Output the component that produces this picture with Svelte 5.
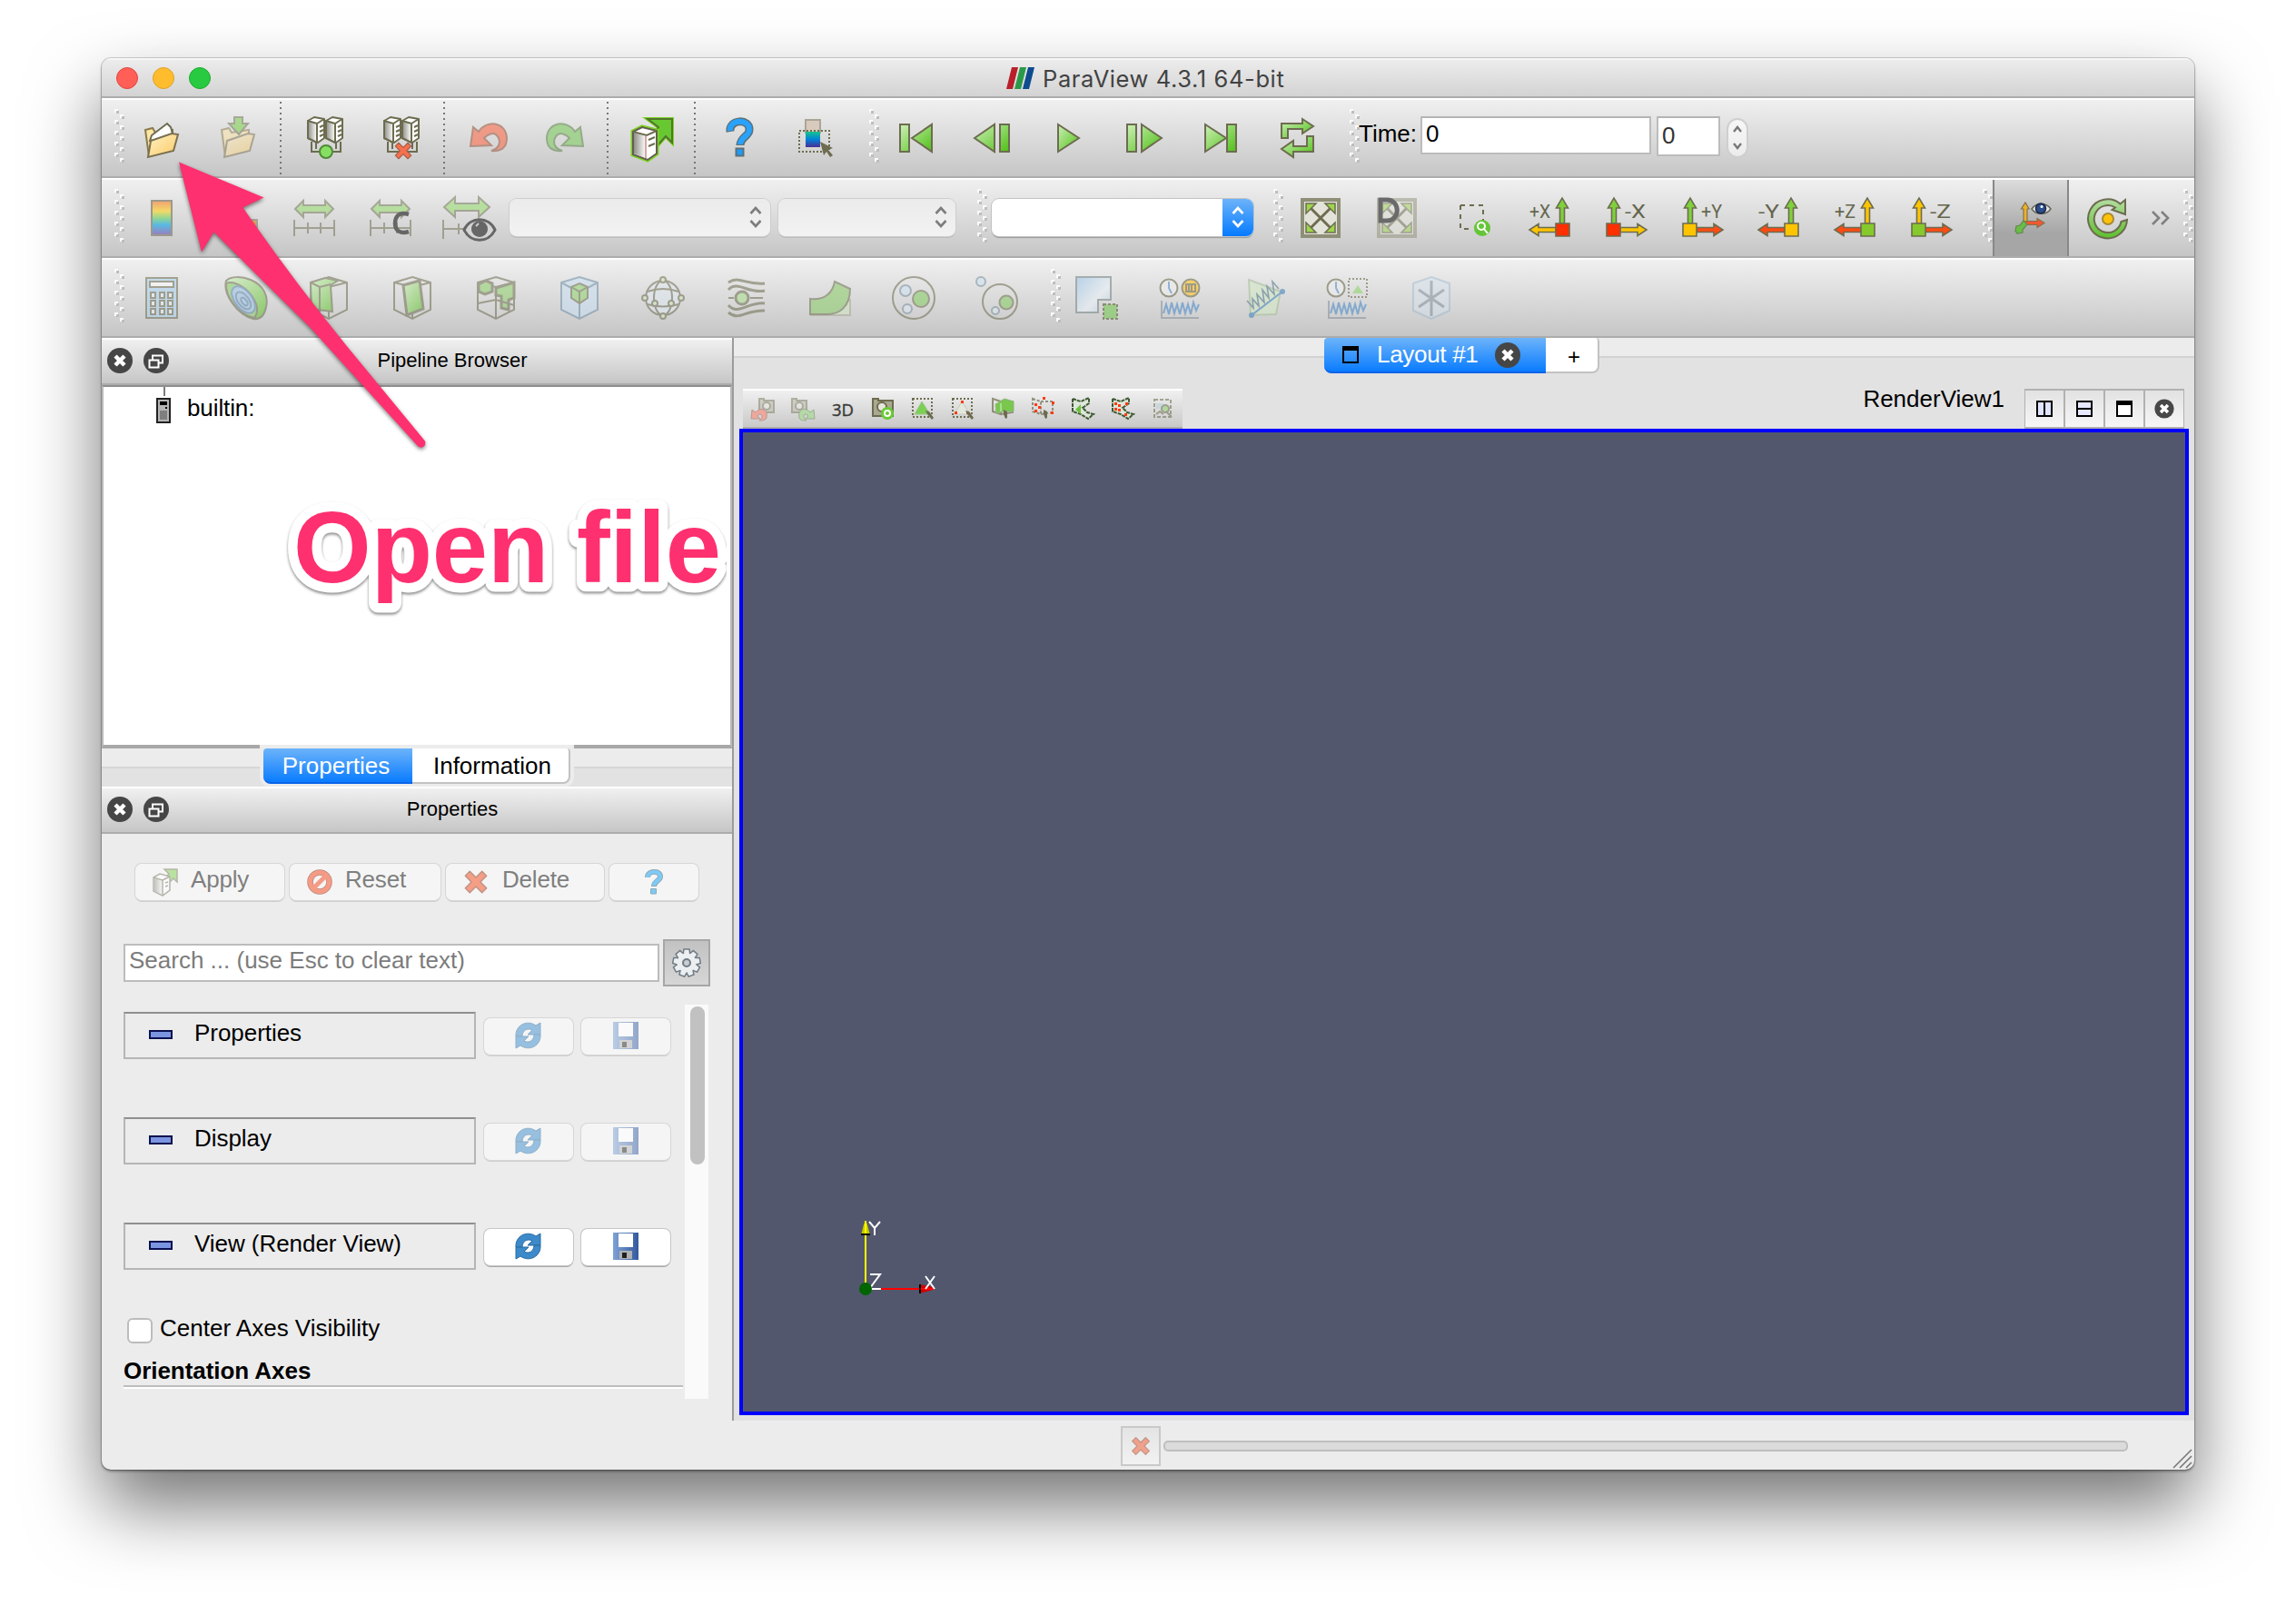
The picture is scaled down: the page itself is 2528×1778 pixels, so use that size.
<script>
  const fileTools = ['open', 'save', '|', 'connect', 'disconnect', '|', 'undo', 'redo', '|', 'apply', '|', 'help', 'palette'];
  const vcrTools = ['first', 'prev', 'play', 'next', 'last', 'loop'];
  const colorTools = ['colorbar', 'coloredit', 'range', 'rangec', 'rangeeye'];
  const G = '#7fd13b', Y = '#ffc400', R = '#ff4a12';
  const axes = [
    { label: '+X', left: true, v: G, h: Y, s: '#ff2f00' },
    { label: '-X', left: false, v: G, h: Y, s: '#ff2f00' },
    { label: '+Y', left: false, v: G, h: R, s: Y },
    { label: '-Y', left: true, v: G, h: R, s: Y },
    { label: '+Z', left: true, v: Y, h: R, s: '#86c92c' },
    { label: '-Z', left: false, v: Y, h: R, s: '#86c92c' }
  ];
  const filters = ['calc', 'contour', 'clip', 'slice', 'threshold', 'extract', 'glyph', 'stream', 'warp', 'group', 'level'];
  const dataTools = ['selext', 'plottime', 'plotline', 'plotsel', 'probe'];
  const viewTools = ['camundo', 'camredo', '3D', 'camera', 'selcell', 'selpoint', 'frcell', 'frpoint', 'polycell', 'polypoint', 'block'];
  const sections = [
    { name: 'Properties', on: false },
    { name: 'Display', on: false },
    { name: 'View (Render View)', on: true }
  ];
  const rows = [0, 1, 2, 3, 4];
</script>

{#snippet grip()}
  <svg class="grip" width="12" height="60" viewBox="0 0 12 60">
    {#each rows as r}
      <path d="M0 {r * 12}h4v4h-4zM6 {r * 12 + 6}h4v4h-4z" fill="#fbfbfb" />
      <path d="M2 {r * 12 + 2}h3v3h-3zM8 {r * 12 + 8}h3v3h-3z" fill="#bdbdbd" />
    {/each}
  </svg>
{/snippet}

{#snippet server(x, y, edge)}
  <g transform="translate({x} {y})" stroke={edge} stroke-width="2" stroke-linejoin="round">
    <path d="M1 5L8 1L19 3V24L12 29L1 24Z" fill="#fff" />
    <path d="M1 5L11 8V29L1 24Z" fill="url(#gray)" />
    <path d="M11 8L19 3" fill="none" />
    <path d="M14 12l4-2M14 17l4-2M14 22l4-2" fill="none" />
  </g>
{/snippet}

{#snippet cross(x, y, s)}
  <path transform="translate({x} {y}) scale({s}) rotate(45)" d="M-3.500-13H3.500V-3.500H13V3.500H3.500V13H-3.500V3.500H-13V-3.500H-3.500Z" fill="#f5704c" stroke="#a5604a" stroke-width="1.500" stroke-linejoin="round" />
{/snippet}

{#snippet cube()}
  <path d="M24 1L44 7V37L24 47L4 37V7ZM4 7L24 12L44 7M24 12V47" />
{/snippet}

{#snippet cam(x, y)}
  <g transform="translate({x} {y})" fill="#b9b9a6" stroke="#77775f" stroke-width="2">
    <path d="M1 1h5v2h11v13h-16z" /><circle cx="9" cy="9" r="4" fill="#e9e9e0" />
  </g>
{/snippet}

{#snippet icon(n)}
  <svg class="ic" width="48" height="48" viewBox="0 0 48 48" fill="none" stroke="#6d6c50" stroke-width="2">
    {#if n === 'open' || n === 'save'}
      <g opacity={n === 'save' ? 0.5 : 1}>
        <path d="M10 44L6 15L14 13L17 18L36 15V25" fill="#ffe6a6" stroke="#8a7b4a" />
        {#if n === 'open'}<path d="M11 27L13 21L30 8L34 12L37 23Z" fill="#fff" />{/if}
        <path d="M12 27L35 19L42 20L37 38L9 45Z" fill="url(#folder)" stroke="#7a7050" />
        {#if n === 'save'}<path d="M20 1h9v7h6L25 20L14 8h6z" fill="#6fcf3a" />{/if}
      </g>
    {:else if n === 'connect' || n === 'disconnect'}
      <path d="M9 28V39H41V28M14 28V36M36 28V36" />
      {@render server(4, 0, '#6d6c50')}
      {@render server(24, 0, '#6d6c50')}
      {#if n === 'connect'}<circle cx="25" cy="39" r="7" fill="#86df62" stroke="#4f8a35" />
      {:else}{@render cross(26, 38, 0.75)}{/if}
    {:else if n === 'undo' || n === 'redo'}
      <g opacity=".75" transform={n === 'redo' ? 'matrix(-1 0 0 1 48 0)' : ''}>
        <path d="M4 33L7 12L13 17C21 4 43 5 44 24C44 36 36 39 27 38C37 35 38 27 33 21C29 17 23 20 19 24L27 32Z"
          fill={n === 'undo' ? '#f5836a' : '#92cf7a'} stroke={n === 'undo' ? '#a87865' : '#7f9a70'} />
      </g>
    {:else if n === 'apply'}
      <path d="M19 3H46V29L39 22L31 31L26 20L31 12Z" fill="#68c832" stroke="#7cd324" stroke-width="4" />
      <path d="M19 3H46V29L39 22L31 31L26 20L31 12Z" fill="#68c832" stroke="#51752c" />
      <path d="M3 17L13 12L29 16V41L19 48L3 42Z" fill="#fff" stroke="#7ed321" stroke-width="5" />
      <path d="M3 17L13 12L29 16V41L19 48L3 42Z" fill="#fff" stroke="#625e50" />
      <path d="M4 18L17 22V46L4 41Z" fill="url(#gray)" stroke="none" /><path d="M17 22V46" stroke="#d7a8a0" />
      <path d="M20 26l7-3M20 33l7-3M3 17L18 21L29 16" />
    {:else if n === 'help'}
      <path d="M14 17C12 3 36 2 35 15C35 22 25 23 25 32" stroke="#5c7078" stroke-width="9" />
      <path d="M20.500 35.500h8v8h-8z" fill="#1d9cf5" stroke="#5c7078" />
      <path d="M14 16C12 3 36 2 35 15C35 22 25 23 25 31" stroke="#28a2fb" stroke-width="6" />
    {:else if n === 'palette'}
      <path d="M13 4h16v14h-16z" fill="#d8cabc" stroke="#aaa599" />
      <path d="M13 17h16v17h-16z" fill="url(#cool)" stroke="none" />
      <path d="M6 16H39V39H6Z" stroke-dasharray="2 2" />
      <path d="M29 28L43 35L38 37L43 43L40 45L36 39L33 43Z" fill="#6d6c50" stroke="none" />
    {:else if n === 'first'}
      <path d="M7 9h10v30H7zM20 24L42 9V39Z" fill="url(#green)" />
    {:else if n === 'prev'}
      <path d="M33 9h10v30H33zM5 24L27 9V39Z" fill="url(#green)" />
    {:else if n === 'play'}
      <path d="M13 9L36 24L13 39Z" fill="url(#green)" />
    {:else if n === 'next'}
      <path d="M5 9h10v30H5zM21 9L43 24L21 39Z" fill="url(#green)" />
    {:else if n === 'last'}
      <path d="M31 9h10v30H31zM7 9L30 24L7 39Z" fill="url(#green)" />
    {:else if n === 'loop'}
      <path d="M7 24V8H30V3L42 11L30 19V14H14V24Z" fill="url(#green)" />
      <path d="M42 22V39H20V45L7 36L20 27V33H35V22Z" fill="url(#green)" />
    {:else if n === 'colorbar'}
      <path d="M13 5h22v38H13z" fill="url(#rain)" stroke="#9c9a8c" />
    {:else if n === 'coloredit'}
      <path d="M24 26h21v18H24z" fill="#eda25f" stroke="#a9a699" />
    {:else if n === 'range' || n === 'rangec'}
      <g opacity=".5"><path d="M3 14L12 5V10H36V5L45 14L36 23V18H12V23Z" fill="#8bdc5e" />
      <path d="M2 26V44M46 26V44M2 35H46M17 29V41M31 29V41" /></g>
      {#if n === 'rangec'}<path d="M44 20C32 16 29 24 29 30C29 38 35 42 44 39" stroke="#666" stroke-width="4.500" />{/if}
    {:else if n === 'rangeeye'}
      <g opacity=".5"><path d="M-1 12L11 1V8H37V1L49 12L37 23V16H11V23Z" fill="#8bdc5e" />
      <path d="M-2 26V47M-2 36H24M15 30V42" /></g>
      <path d="M21 37C28 22 48 22 55 37C48 52 28 52 21 37Z" fill="#d4d4d4" stroke="#666" stroke-width="3" />
      <circle cx="38" cy="36" r="9" fill="#666" stroke="none" /><path d="M34 33l3-3" stroke="#ccc" />
    {:else if n === 'reset' || n === 'resetd'}
      <g opacity={n === 'resetd' ? 0.5 : 1}>
        <path d="M4 4H44V44H4Z" fill="#e3e3da" stroke="#8f8f78" stroke-width="4" />
        <path d="M12 12L36 36M36 12L12 36" stroke-width="3" />
        <path d="M8 8h11L8 19zM40 8v11L29 8zM8 40V29L19 40zM40 40H29L40 29z" fill="#9ed64b" stroke-width="1.500" />
      </g>
      {#if n === 'resetd'}<path d="M6 4V27H13C28 27 28 4 13 4Z" stroke="#6a6a6a" stroke-width="5" />{/if}
    {:else if n === 'zoombox'}
      <path d="M10 10H35V27M10 10V36H22" stroke-dasharray="5 5" />
      <circle cx="34" cy="35" r="9" fill="#65c636" stroke="none" /><circle cx="33" cy="33" r="4" stroke="#fff" /><path d="M36 36l4 5" stroke="#fff" />
    {:else if n === 'axesshow'}
      <g stroke="#86704a" stroke-width="1.200">
        <path d="M16 29V14H13.500L18 7L22 14H20V29Z" fill="#eab32a" />
        <path d="M18 27.500H31V24.500L39 29.500L31 34.500V31.500H18Z" fill="#f0592f" />
        <path d="M16 27L20 31L15 37V40L9 41L7 38L8 33L12 32Z" fill="#6cbc48" stroke="#5f8a4c" />
      </g>
      <path d="M25 14C30 6.500 41 6.500 46 14C41 21 30 21 25 14Z" fill="#e6e6e6" stroke="#66665c" stroke-width="1.500" /><circle cx="35" cy="13.500" r="5.500" fill="#2c4f8c" stroke="#1b2844" stroke-width="1.500" /><circle cx="36" cy="11.500" r="1.500" fill="#fff" stroke="none" />
    {:else if n === 'center'}
      <path d="M46 26A21.500 21.500 0 1 1 38.500 8.500L44 4V20L29.500 15L33 12.500A15 15 0 1 0 39.500 28Z" fill="url(#ring)" />
      <circle cx="25" cy="25" r="6" fill="#ffc20a" stroke="#a78b33" />
    {:else if n === 'calc'}
      <g opacity=".55"><path d="M7 2H41V46H7Z" fill="#a9d3f1" /><path d="M11 6H37V12H11Z" fill="#fff" />
      {#each [18, 27, 36] as y}<path d="M12 {y}h5v6h-5zM22 {y}h5v6h-5zM31 {y}h5v6h-5z" fill="#e8f2fa" />{/each}</g>
    {:else if n === 'contour'}
      <g opacity=".55"><path d="M3 5C8 0 20 0 30 4C44 10 50 22 47 34C45 44 40 48 33 47C16 43-1 20 3 5Z" fill="url(#green)" /><path d="M3 8C10 5 22 10 30 20C38 30 39 40 34 46C18 43 2 24 3 8Z" fill="#89cf63" /><g stroke="#5e88ad" fill="#9bc4e9"><ellipse cx="22" cy="26" rx="9.500" ry="17" transform="rotate(-38 22 26)" /><ellipse cx="22" cy="27" rx="6" ry="11" transform="rotate(-38 22 27)" /><ellipse cx="23" cy="28" rx="2.500" ry="5" transform="rotate(-38 23 28)" /></g></g>
    {:else if n === 'clip'}
      <g opacity=".55">{@render cube()}<path d="M4 7L20 2L34 5L26 10L28 39L5 36Z" fill="url(#green)" /><path d="M4 7L14 12L26 9M14 12V40" /></g>
    {:else if n === 'slice'}
      <g opacity=".55">{@render cube()}<path d="M14 10L32 5L36 36L18 43Z" fill="url(#green)" stroke-width="3" /></g>
    {:else if n === 'threshold'}
      <g opacity=".55">{@render cube()}<path d="M5 9L13 5L20 8V17L12 20L5 17ZM24 13L44 7V24L38 26V37L30 35V22L24 21Z" fill="#8ed06a" stroke-width="3" /><path d="M4 30L24 26L44 32" /></g>
    {:else if n === 'extract'}
      <g opacity=".55"><path d="M24 1L44 7V37L24 47L4 37V7Z" fill="#c9e0f3" stroke="#6f8ea6" /><path d="M24 30V47M4 7L15 13M44 7L33 13" stroke="#6f8ea6" /><path d="M24 8L33 12V24L24 30L15 24V12Z" fill="#8fd46b" /><path d="M15 12L24 17L33 12M24 17V30" /></g>
    {:else if n === 'glyph'}
      <g opacity=".55"><circle cx="24" cy="24" r="19" fill="#dfe8f1" /><ellipse cx="24" cy="24" rx="10" ry="19" /><path d="M7 17Q24 11 41 17M7 31Q24 36 41 31" />
      {#each [[24, 4], [24, 44], [4, 24], [44, 24], [15, 30], [33, 30]] as p}<circle cx={p[0]} cy={p[1]} r="3" fill="#cfe9bd" />{/each}</g>
    {:else if n === 'stream'}
      <g opacity=".55" stroke-width="3"><path d="M4 7C16-1 22 10 44 8M4 15C14 4 26 20 44 16M4 32C14 44 26 28 44 30M4 40C16 50 22 37 44 38" /><ellipse cx="19" cy="24" rx="7" ry="7" fill="#a9e08a" /><path d="M4 24h6M28 24h14" stroke-width="2" /></g>
    {:else if n === 'warp'}
      <g opacity=".55"><path d="M30 26H46V43H2" fill="#cfe6c0" stroke="#a9a995" /><path d="M2 25C18 27 27 18 29 6L46 14C46 34 34 43 18 42H2Z" fill="#89cc66" /></g>
    {:else if n === 'group'}
      <g opacity=".55"><circle cx="24" cy="24" r="23" /><circle cx="15" cy="16" r="6" fill="#cfe2f2" stroke="#78909f" /><circle cx="32" cy="25" r="9" fill="#84cc60" /><circle cx="17" cy="36" r="5" fill="#dde8f0" stroke="#78909f" /></g>
    {:else if n === 'level'}
      <g opacity=".55"><circle cx="27" cy="28" r="19" /><circle cx="6" cy="6" r="5" fill="#cfe2f2" stroke="#78909f" /><circle cx="34" cy="29" r="7.500" fill="#84cc60" /><circle cx="22" cy="38" r="4" fill="#dde8f0" stroke="#78909f" /></g>
    {:else if n === 'selext'}
      <g opacity=".7"><path d="M1 1H39V26H25V40H1Z" fill="url(#sky)" stroke="#8a9796" /><path d="M31 31H46V47H31Z" fill="#86cb68" stroke-dasharray="3 2" /></g>
    {:else if n === 'plottime' || n === 'plotsel'}
      <g opacity=".6"><circle cx="11" cy="13" r="9.500" fill="#eee" /><path d="M11 6V13L14 19" stroke="#5c94c9" />
      {#if n === 'plottime'}<circle cx="35" cy="13" r="9.500" fill="#ffc21e" /><path d="M30 9h10v8h-10zM33 9v8M36 9v8" />
      {:else}<path d="M25 3H45V23H25Z" stroke-dasharray="2 2" /><path d="M35 10L41 19H29Z" fill="#90d56a" stroke="none" />{/if}
      <path d="M3 27V46H44" stroke="#8c95a0" /><path d="M5 41L8 31L11 42L14 29L17 41L20 31L23 42L26 29L29 41L32 31L35 42L38 29L41 38L44 31" stroke="#4f8dc9" /></g>
    {:else if n === 'plotline'}
      <g opacity=".6"><path d="M7 4L42 17L37 42L9 43Z" fill="#d2e8c5" stroke="#a9c09c" /><path d="M10 43L44 17" stroke="#4684bd" /><circle cx="10" cy="43" r="3" fill="#4684bd" stroke="none" /><circle cx="44" cy="17" r="3" fill="#4684bd" stroke="none" /><path d="M5 27L12 35L11 25L18 33L16 20L24 29L22 15L29 24L27 11L35 20L33 6L40 14" stroke="#55788f" stroke-width="1.600" /></g>
    {:else if n === 'probe'}
      <g opacity=".4"><path d="M24 1L44 8V38L24 47L4 38V8Z" fill="#d5e4f0" stroke="#8fb2cc" /><path d="M24 5V44M10 15L38 34M38 15L10 34" stroke="#5f7683" stroke-width="3" /></g>
    {/if}
  </svg>
{/snippet}

{#snippet axis(a)}
  <svg class="ic" width="48" height="48" viewBox="0 0 48 48" stroke="#6d6c50" stroke-width="1.600">
    <g transform={a.left ? '' : 'matrix(-1 0 0 1 49 0)'}>
      <path d="M35.500 30V13H31.500L38 2L44.500 13H40.500V30Z" fill={a.v} />
      <path d="M31 34.500H12V30.500L2 37L12 43.500V39.500H31Z" fill={a.h} />
      <path d="M31 30h15v14h-15z" fill={a.s} />
    </g>
    <text x={a.left ? 2 : 23} y="24" fill="#66664f" stroke="none" class="axl" textLength="23" lengthAdjust="spacingAndGlyphs">{a.label}</text>
  </svg>
{/snippet}

{#snippet mini(n)}
  <svg width="28" height="28" viewBox="0 0 28 28" fill="none" stroke="#6d6c50" stroke-width="2">
    {#if n === 'camundo'}
      <g opacity=".5">{@render cam(9, 2)}</g><path d="M1 25L2 15L6 18C12 11 20 15 18 24C17 27 13 27 10 27C14 24 14 20 10 20L8 22L11 25Z" fill="#eda79b" stroke="#b99a92" stroke-width="1" />
    {:else if n === 'camredo'}
      <g opacity=".5">{@render cam(1, 2)}</g><path d="M27 25L26 15L22 18C16 11 8 15 10 24C11 27 15 27 18 27C14 24 14 20 18 20L20 22L17 25Z" fill="#b5d9a6" stroke="#9cab94" stroke-width="1" />
    {:else if n === 'camera'}
      <path d="M3 3h6v2h16v17H3z" fill="#a9a991" stroke="#6d6c50" /><circle cx="13" cy="12" r="5" fill="#e6e6dc" /><circle cx="19" cy="19" r="7" fill="#6acb36" stroke="none" /><circle cx="19" cy="19" r="3" stroke="#fff" />
    {:else if n === 'selcell' || n === 'selpoint'}
      <path d="M3 3H24V23H3Z" stroke-dasharray="2 2" />
      <path d="M13 6L22 20H5Z" fill={n === 'selcell' ? '#7ccf55' : '#e4e8dc'} stroke={n === 'selcell' ? '#9ac984' : '#c6ccbd'} stroke-width="1" />
      {#if n === 'selpoint'}<path d="M12 5h3v3h-3zM5 17h3v3H5zM18 17h3v3h-3z" fill="#ff3a12" stroke="none" />{/if}
      <path d="M17 16L21 17L26 24L24 26L19 20Z" fill="#6d6c50" stroke="none" />
    {:else if n === 'frcell' || n === 'frpoint'}
      <path d="M3 3L12 6V20L3 17ZM12 6H25V18L12 20" opacity=".7" stroke-dasharray={n === 'frpoint' ? '3 2' : ''} />
      {#if n === 'frcell'}<path d="M6 9L16 3L26 6V17L14 17L7 19Z" fill="#79c74f" stroke="#8fb77b" stroke-width="1" /><path d="M12 8V17" stroke="#a9dd8d" />
      {:else}<path d="M5 8h3v3H5zM9 11h3v3H9zM5 15h3v3H5zM14 1h3v3h-3zM24 6h3v3h-3zM23 17h3v3h-3z" fill="#ff3a12" stroke="none" />{/if}
      <path d="M15 15L19 17L19 24L17 25L15 20Z" fill="#6d6c50" stroke="none" />
    {:else if n === 'polycell' || n === 'polypoint'}
      <path d="M3 3L12 6L21 2V8L14 13L19 18L26 20L20 25L12 20L3 17Z" stroke="#3d5a33" stroke-dasharray="4 1" fill="#dfe6da" />
      {#if n === 'polycell'}<path d="M6 15L12 9V20Z" fill="#6cc13f" stroke="none" />
      {:else}<path d="M5 7h3v3H5zM9 9h3v3H9zM5 13h3v3H5zM9 14h3v3H9zM17 7h3v3h-3zM16 19h3v3h-3z" fill="#ff3a12" stroke="none" />{/if}
    {:else if n === 'block'}
      <g opacity=".55"><path d="M5 4H23V23H5Z" stroke-dasharray="4 2" /><path d="M7 8h8v6H7z" fill="#b9cfdc" stroke="none" /><circle cx="17" cy="14" r="4" fill="#8fd46b" /><path d="M18 17l6 6M7 20l4-3l4 3" /></g>
    {/if}
  </svg>
{/snippet}

{#snippet closeBall()}
  <svg width="28" height="28" viewBox="0 0 28 28"><circle cx="14" cy="14" r="14" fill="#464646" /><path d="M9 9L19 19M19 9L9 19" stroke="#fff" stroke-width="4.500" /></svg>
{/snippet}

{#snippet dockHead(title)}
  <div class="dockhead">
    {@render closeBall()}
    <svg width="28" height="28" viewBox="0 0 28 28"><circle cx="14" cy="14" r="14" fill="#464646" /><path d="M6.500 13.500h10v8h-10zM10 13V8.500h11v8h-4" fill="none" stroke="#fff" stroke-width="2" /></svg>
    <span>{title}</span>
  </div>
{/snippet}

{#snippet chevrons(color)}
  <svg width="16" height="26" viewBox="0 0 16 26" fill="none" stroke={color} stroke-width="2.600"><path d="M2.500 9L8 3L13.500 9M2.500 17L8 23L13.500 17" /></svg>
{/snippet}

<svg class="defs" width="0" height="0">
  <defs>
    <linearGradient id="green" x2="1" y2="1"><stop offset="0" stop-color="#cdf0b8" /><stop offset="1" stop-color="#4fbf15" /></linearGradient>
    <linearGradient id="ring" x2="0" y2="1"><stop offset="0" stop-color="#b4dca2" /><stop offset="1" stop-color="#5cc02b" /></linearGradient>
    <linearGradient id="gray" x2="1" y2="0"><stop offset="0" stop-color="#8f8f88" /><stop offset="1" stop-color="#fff" /></linearGradient>
    <linearGradient id="folder" x2="1" y2="1"><stop offset="0" stop-color="#fff0c4" /><stop offset="1" stop-color="#fbcb66" /></linearGradient>
    <linearGradient id="sky" x2="1" y2="1"><stop offset="0" stop-color="#a5c9e8" /><stop offset=".6" stop-color="#eaf0f5" /><stop offset="1" stop-color="#b5cfe6" /></linearGradient>
    <linearGradient id="cool" x2="0" y2="1"><stop offset="0" stop-color="#19c58d" /><stop offset=".5" stop-color="#0082d8" /><stop offset="1" stop-color="#4b2d94" /></linearGradient>
    <linearGradient id="rain" x2="0" y2="1"><stop offset="0" stop-color="#f0a070" /><stop offset=".3" stop-color="#f3d968" /><stop offset=".5" stop-color="#93d790" /><stop offset=".7" stop-color="#58b9e4" /><stop offset="1" stop-color="#9c7cbb" /></linearGradient>
    <linearGradient id="disk" x2="1" y2="0"><stop offset="0" stop-color="#7fa2d6" /><stop offset="1" stop-color="#335a9d" /></linearGradient>
  </defs>
</svg>

<div class="stage">
  <div class="window">
    <header class="titlebar">
      <div class="lights"><i class="red"></i><i class="amber"></i><i class="lime"></i></div>
      <svg class="logo" width="32" height="24" viewBox="0 0 32 24"><path d="M6 0h7L7 24H0z" fill="#b8202a" /><path d="M15 0h7L16 24H9z" fill="#2b9a48" /><path d="M24 0h7L25 24H18z" fill="#0e4b8f" /></svg>
      <span class="title">ParaView 4.3.1 64-bit</span>
    </header>

    <div class="toolbar">
      {@render grip()}
      {#each fileTools as t}
        {#if t === '|'}<i class="sep"></i>{:else}<div class="cell">{@render icon(t)}</div>{/if}
      {/each}
      <div class="gripgap">{@render grip()}</div>
      {#each vcrTools as t}<div class="cell">{@render icon(t)}</div>{/each}
      <div class="gripgap timegrip">{@render grip()}</div>
      <span class="timelabel">Time:</span>
      <div class="field time">0</div>
      <div class="field step">0</div>
      <div class="stepper"><svg width="12" height="32" viewBox="0 0 12 32" fill="none" stroke="#777" stroke-width="2.400"><path d="M2 9L6 4L10 9M2 22L6 27L10 22" /></svg></div>
    </div>

    <div class="toolbar">
      {@render grip()}
      {#each colorTools as t}<div class="cell">{@render icon(t)}</div>{/each}
      <div class="combo off c1">{@render chevrons('#7d7d7d')}</div>
      <div class="combo off c2">{@render chevrons('#7d7d7d')}</div>
      <div class="gripgap g2">{@render grip()}</div>
      <div class="combo c3"><b>{@render chevrons('#fff')}</b></div>
      <div class="gripgap g3">{@render grip()}</div>
      <div class="cell">{@render icon('reset')}</div>
      <div class="cell">{@render icon('resetd')}</div>
      <div class="cell">{@render icon('zoombox')}</div>
      {#each axes as a}<div class="cell">{@render axis(a)}</div>{/each}
      <div class="gripgap g4">{@render grip()}</div>
      <div class="cell pressed">{@render icon('axesshow')}</div>
      <div class="cell">{@render icon('center')}</div>
      <svg class="more" width="22" height="18" viewBox="0 0 22 18" fill="none" stroke="#808080" stroke-width="2.600"><path d="M2 2L9 9L2 16M12 2L19 9L12 16" /></svg>
      <div class="gripgap g5">{@render grip()}</div>
    </div>

    <div class="toolbar">
      {@render grip()}
      {#each filters as t}<div class="cell wide">{@render icon(t)}</div>{/each}
      <div class="gripgap g6">{@render grip()}</div>
      {#each dataTools as t}<div class="cell wide">{@render icon(t)}</div>{/each}
    </div>

    <main>
      <aside>
        {@render dockHead('Pipeline Browser')}
        <div class="tree">
          <svg width="16" height="40" viewBox="0 0 16 40"><path d="M9 0v10" stroke="#7d7d7d" stroke-width="2" /><path d="M1 13h14v26H1z" fill="#b5b5b5" stroke="#222" stroke-width="2" /><path d="M4 16h8v4H4zM10 22h2v2h-2z" fill="#000" /><path d="M4 26h8v10H4z" fill="#7f7f7f" /></svg>
          <span>builtin:</span>
        </div>
        <div class="tabrow">
          <div class="tabs"><b>Properties</b><span>Information</span></div>
        </div>
        {@render dockHead('Properties')}
        <div class="props">
          <div class="actions">
            <div class="btn apply">
              <svg width="30" height="32" viewBox="0 0 30 32" fill="none" stroke="#777763" stroke-width="1.500" opacity=".5"><path d="M14 2H28V16L24 12L18 18L14 13L19 7Z" fill="#7fd14b" /><path d="M2 11L9 7L20 10V25L12 31L2 26Z" fill="#fff" /><path d="M3 12L12 15V30L3 26Z" fill="url(#gray)" stroke="none" /><path d="M2 11L12 14V31M12 14L20 10M15 17l3-1M15 21l3-1" /></svg>
              <span>Apply</span>
            </div>
            <div class="btn resetb">
              <svg width="30" height="28" viewBox="0 0 30 28" fill="none"><circle cx="15" cy="14" r="10.500" stroke="#b9867a" stroke-width="6.500" /><circle cx="15" cy="14" r="10.500" stroke="#f59b85" stroke-width="5" /><path d="M8 21L22 7" stroke="#f59b85" stroke-width="5" /></svg>
              <span>Reset</span>
            </div>
            <div class="btn del">
              <svg width="26" height="26" viewBox="-13 -13 26 26" opacity=".65">{@render cross(0, 0, 1)}</svg>
              <span>Delete</span>
            </div>
            <div class="btn q">
              <svg width="22" height="28" viewBox="0 0 22 28" fill="none"><path d="M4 9C4 1 18 1 18 8C18 13 11 13 11 19" stroke="#8fabb8" stroke-width="6" /><path d="M4 9C4 1 18 1 18 8C18 13 11 13 11 18" stroke="#7fc9f7" stroke-width="4" /><path d="M7.500 21.500h6v5.500h-6z" fill="#7fc9f7" stroke="#8fabb8" /></svg>
            </div>
          </div>
          <div class="searchrow">
            <div class="search">Search ... (use Esc to clear text)</div>
            <div class="gear"><svg width="32" height="32" viewBox="-16 -16 32 32"><g fill="#eceff2" stroke="#717b84" stroke-width="1.500">
              {#each [0, 40, 80, 120, 160, 200, 240, 280, 320] as r}<path transform="rotate({r})" d="M-4-9L-3-15H3L4-9" />{/each}
              <circle r="10.500" stroke="none" /><circle r="4" fill="#c9ced2" stroke-width="2" /></g></svg></div>
          </div>
          <div class="scrollarea">
            <div class="list">
              {#each sections as s}
                <div class="section">
                  <div class="sechead"><i></i><span>{s.name}</span></div>
                  <div class="btn small" class:on={s.on}>
                    <svg width="30" height="30" viewBox="0 0 30 30" fill="#3c8aca" stroke="#286a9f" stroke-width="1">
                      <path id="swirl" d="M1 16C0 4 13-3 23 4L28 1V14H14L19 9C13 6 8 10 8 16Z" />
                      <path d="M1 16C0 4 13-3 23 4L28 1V14H14L19 9C13 6 8 10 8 16Z" transform="rotate(180 14.500 15)" />
                    </svg>
                  </div>
                  <div class="btn small" class:on={s.on}>
                    <svg width="28" height="30" viewBox="0 0 28 30"><path d="M0 0H28V30H0Z" fill="url(#disk)" /><path d="M6 1H22V16H6Z" fill="#fff" /><path d="M7 20H21V29H7Z" fill="#aeb2b4" /><path d="M10 22h5v6h-5z" fill="#222" /></svg>
                  </div>
                </div>
              {/each}
              <label class="check"><i></i><span>Center Axes Visibility</span></label>
              <div class="group">Orientation Axes</div>
            </div>
            <div class="track"><i></i></div>
          </div>
        </div>
      </aside>

      <section class="right">
        <div class="layoutbar">
          <div class="tabs lt">
            <b><svg width="18" height="20" viewBox="0 0 18 20"><path d="M1 1H17V18H1Z" fill="none" stroke="#000" stroke-width="2" /><path d="M0 0h18v5H0z" /></svg><em>Layout #1</em>{@render closeBall()}</b>
            <span>+</span>
          </div>
        </div>
        <div class="viewhead">
          <div class="minibar">
            {#each viewTools as t}
              <div class="minicell">{#if t === '3D'}<span>3D</span>{:else}{@render mini(t)}{/if}</div>
            {/each}
          </div>
          <span class="viewname">RenderView1</span>
          <div class="winbtns">
            <div><svg width="18" height="18" viewBox="0 0 18 18"><path d="M1 1H17V17H1ZM9 1V17" fill="#dfe4ff" stroke="#000" stroke-width="2" /></svg></div>
            <div><svg width="18" height="18" viewBox="0 0 18 18"><path d="M1 1H17V17H1ZM1 9H17" fill="#e6e9ff" stroke="#000" stroke-width="2" /></svg></div>
            <div><svg width="18" height="18" viewBox="0 0 18 18"><path d="M1 1H17V17H1Z" fill="#fff" stroke="#000" stroke-width="2" /><path d="M0 0h18v5H0z" /></svg></div>
            <div><svg width="22" height="22" viewBox="0 0 28 28"><circle cx="14" cy="14" r="13.500" fill="#484848" /><path d="M9 9L19 19M19 9L9 19" stroke="#fff" stroke-width="4.500" /></svg></div>
          </div>
        </div>
        <div class="view">
          <svg class="triad" width="100" height="100" viewBox="0 0 100 100" fill="none" stroke-width="2">
            <path d="M23 80V18" stroke="#ff0" /><path d="M18 28L21 16L23 12L25 16L28 28Z" fill="#c8c800" /><path d="M23 12V28" stroke="#ff0" /><path d="M18 27H28" stroke="#000" />
            <path d="M40 87H84" stroke="#f00" /><path d="M82 82L94 84L99 87L94 89L82 92Z" fill="#d00000" /><path d="M84 87H98" stroke="#f00" /><path d="M83 82V92" stroke="#000" />
            <path d="M27 13L33 20L39 13M33 20V28M89 73L99 87M99 73L89 87M28 71H39L28 86V87H40" stroke="#fff" />
            <circle cx="23" cy="87" r="7" fill="#006400" />
          </svg>
        </div>
      </section>
    </main>

    <footer>
      <div class="abort"><svg width="22" height="22" viewBox="-13 -13 26 26" opacity=".6">{@render cross(0, 0, 0.95)}</svg></div>
      <div class="progress"></div>
      <svg class="sizer" width="22" height="22" viewBox="0 0 22 22" stroke="#777" stroke-width="1.600"><path d="M1 21L21 1M8 21L21 8M15 21L21 15" /></svg>
    </footer>
  </div>

  <svg class="notes" width="800" height="740" viewBox="0 0 800 740">
    <path class="arrow" d="M197 178.500L290.500 217.500L267.500 228.500Q318 302 381 380L467.500 485A4.700 4.700 0 0 1 459.500 490.500L341 360Q290 310 235.500 255.500L222 277.500Z" />
    <text x="323" y="641" textLength="471" lengthAdjust="spacingAndGlyphs">Open file</text>
  </svg>
</div>

<style>
  :global(body) { margin: 0; background: #fff; }
  * { box-sizing: border-box; }
  .defs { position: absolute; }
  .stage { position: relative; width: 2528px; height: 1778px; overflow: hidden; padding: 64px 0 0 112px; font: 26px/30px "Liberation Sans", Arial, sans-serif; color: #000; background: #fff; }
  .window { width: 2304px; height: 1554px; border-radius: 10px; background: #ececec; overflow: hidden; display: flex; flex-direction: column; box-shadow: 0 0 0 1px rgba(0,0,0,.16), 0 2px 3px rgba(0,0,0,.35), 0 40px 80px rgba(0,0,0,.55); }
  svg { flex: none; display: block; }
  .titlebar { flex: none; height: 44px; display: flex; align-items: center; justify-content: center; background: linear-gradient(#ececec, #d3d3d3); border-top: 2px solid #f6f6f6; border-bottom: 2px solid #acacac; }
  .lights { display: flex; gap: 16px; margin-right: auto; padding-left: 16px; width: 996px; }
  .lights i { width: 24px; height: 24px; border-radius: 50%; border: 1px solid #e0443e; background: #ff5f57; }
  .lights .amber { border-color: #dfa023; background: #ffbd2e; }
  .lights .lime { border-color: #1dab2c; background: #28ca42; }
  .title { width: 1276px; padding: 2px 0 0 8px; font-family: Inter, sans-serif; font-size: 25.500px; color: #424242; white-space: nowrap; letter-spacing: .6px; }
  .toolbar { flex: none; height: 88px; display: flex; align-items: center; background: linear-gradient(#f0f0f0, #c6c6c6); border-top: 2px solid #fff; border-bottom: 2px solid #acacac; }
  .toolbar > .grip { margin: 0 -2px 4px 14px; }
  .cell { flex: none; width: 84px; height: 84px; display: flex; align-items: center; justify-content: center; }
  .cell.wide { width: 92px; }
  .toolbar:nth-of-type(3) > .grip { margin-right: -6px; }
  .ic { overflow: visible; }
  .axl { font: 21px Roboto, sans-serif; }
  .sep { flex: none; width: 12px; height: 80px; background: repeating-linear-gradient(#777 0 2px, transparent 2px 6px) 4px 0 / 2px 80px no-repeat; }
  .gripgap { flex: none; width: 26px; display: flex; padding: 0 0 4px 17px; }
  .timegrip { padding-left: 16px; }
  .timelabel { width: 68px; padding-bottom: 10px; white-space: nowrap; letter-spacing: 0; }
  .field { flex: none; background: #fff; border: 2px solid #bcbcbc; border-top-color: #b4b4b4; padding: 1px 0 0 4px; }
  .time { width: 254px; height: 42px; margin-bottom: 6px; line-height: 33px; }
  .step { width: 70px; height: 44px; margin: 0 0 4px 6px; line-height: 36px; color: #333; }
  .stepper { width: 24px; height: 44px; margin-left: 7px; border-radius: 12px; background: linear-gradient(#f7f7f7, #ececec); border: 2px solid #cfcfcf; display: flex; align-items: center; justify-content: center; }
  .combo { flex: none; height: 41px; border-radius: 8px; background: #fff; display: flex; justify-content: flex-end; align-items: center; margin-bottom: 2px; box-shadow: 0 0 0 1px #c3c3c3, 0 2px 1px #999; overflow: hidden; }
  .combo.off { background: linear-gradient(#ebebeb, #f2f2f2); box-shadow: 0 0 0 1px #cdcdcd, 0 2px 0 #bdbdbd; padding-right: 8px; }
  .c1 { width: 287px; margin-left: 5px; }
  .c2 { width: 195px; margin-left: 9px; }
  .c3 { width: 288px; }
  .c3 b { width: 34px; height: 41px; background: linear-gradient(#6cb3fa, #067bff); display: flex; align-items: center; justify-content: center; }
  .g2 { width: 40px; padding-left: 24px; }
  .g3 { width: 32px; padding-left: 22px; }
  .g4 { padding-left: 15px; }
  .g5 { width: 12px; margin-left: 14px; padding-left: 0; }
  .g6 { width: 18px; padding-left: 13px; }
  .pressed { background: linear-gradient(#dcdcdc, #a6a6a6 70%); border: solid #888; border-width: 0 2px; }
  .more { margin-left: 6px; }

  main { display: flex; height: 1192px; flex: none; }
  aside { width: 696px; border-right: 2px solid #9b9b9b; display: flex; flex-direction: column; }
  .dockhead { flex: none; height: 52px; display: flex; align-items: center; gap: 12px; padding: 0 0 3px 6px; background: linear-gradient(#f0f0f0, #c6c6c6); border-top: 2px solid #fff; border-bottom: 2px solid #acacac; }
  .dockhead span { flex: 1; text-align: center; padding-right: 8px; font-size: 22px; }
  .tree { flex: none; height: 400px; border: solid #b9b9b9; border-width: 2px 2px 4px; border-top-color: #8e8e8e; border-bottom-color: #a8a8a8; background: #fff; padding-left: 58px; display: flex; }
  .tree span { margin: 8px 0 0 18px; letter-spacing: -.1px; }
  .tabrow { flex: none; height: 42px; display: flex; justify-content: center; background: linear-gradient(#ececec 20px, #d6d6d6 20px 22px, #e2e2e2 22px); }
  .tabs { display: flex; height: 39px; border-radius: 0 0 8px 8px; box-shadow: 0 0 0 4px #ececec; margin-left: -1px; }
  .tabs b { font-weight: 400; color: #fff; background: linear-gradient(#6cb3fa, #0a7cff); border-bottom: 2px solid #0a63ea; border-radius: 4px 0 0 8px; display: flex; width: 164px; justify-content: center; padding: 4px 3px 0 0; white-space: nowrap; }
  .tabs span { background: #fff; border: solid #c2c2c2; border-width: 0 2px 2px 0; border-radius: 0 4px 8px 0; width: 174px; text-align: center; padding: 4px 0 0 5px; }
  .props { padding: 33px 24px 0 24px; }
  .actions { display: flex; gap: 6px; padding-left: 13px; }
  .btn { height: 40px; border-radius: 7px; background: #f5f5f5; box-shadow: 0 0 0 1px #d6d6d6, 0 2px 0 #cfcfcf; color: #7f7f7f; display: flex; align-items: center; }
  .btn span { padding-bottom: 6px; letter-spacing: -.2px; }
  .apply { width: 164px; padding-left: 18px; gap: 13px; }
  .resetb { width: 166px; padding-left: 18px; gap: 13px; }
  .del { width: 174px; padding-left: 20px; gap: 16px; }
  .q { width: 98px; justify-content: center; }
  .searchrow { display: flex; gap: 4px; margin-top: 43px; align-items: center; }
  .search { width: 590px; height: 42px; background: #fff; border: 2px solid #bcbcbc; padding: 1px 0 0 4px; color: #7c7c7c; letter-spacing: 0; }
  .gear { width: 52px; height: 52px; border: 2px solid #a6a6a6; background: linear-gradient(#c2c2c2, #d6d6d6); display: flex; align-items: center; justify-content: center; }
  .scrollarea { display: flex; height: 434px; margin-top: 20px; overflow: hidden; }
  .list { width: 618px; padding-top: 8px; }
  .section { display: flex; height: 52px; margin-bottom: 64px; align-items: center; }
  .sechead { width: 388px; height: 52px; border: 2px solid #b5b5b5; border-top-color: #8f8f8f; display: flex; align-items: center; padding-left: 26px; margin-right: 9px; }
  .sechead i { width: 26px; height: 10px; background: #7b95e0; border: 2px solid #0a1050; margin-bottom: 2px; }
  .sechead span { margin-left: 24px; padding-bottom: 6px; letter-spacing: -.05px; }
  .small { width: 98px; justify-content: center; margin: 2px 9px 0 0; padding-bottom: 2px; }
  .small svg { opacity: .5; }
  .small.on { background: #fff; box-shadow: 0 0 0 1px #c6c6c6, 0 2px 0 #a9a9a9; }
  .small.on svg { opacity: 1; }
  .check { display: flex; gap: 8px; margin: -15px 0 0 4px; align-items: center; }
  .check i { width: 28px; height: 28px; background: #fff; border: 2px solid #bcbcbc; border-radius: 6px; }
  .check span { padding-bottom: 5px; letter-spacing: 0; }
  .group { font-weight: 700; border-bottom: 2px solid #bdbdbd; box-shadow: 0 2px 0 #fff; margin: 13px 2px 0 0; height: 32px; line-height: 28px; letter-spacing: -.05px; }
  .track { width: 26px; background: #fafafa; padding: 2px 4px 0 6px; }
  .track i { display: block; height: 174px; border-radius: 8px; background: #c1c1c1; }

  .right { width: 1608px; display: flex; flex-direction: column; background: #e2e2e2; }
  .layoutbar { height: 56px; flex: none; display: flex; background: linear-gradient(#ececec 20px, #d2d2d2 20px 22px, #e2e2e2 22px); padding-left: 650px; }
  .lt { margin: 0; box-shadow: none; }
  .lt b { width: 244px; justify-content: flex-start; padding: 0 0 0 20px; align-items: center; }
  .lt em { font-style: normal; flex: none; width: 150px; padding-left: 20px; padding-bottom: 2px; letter-spacing: -.3px; }
  .lt span { width: 59px; padding-top: 6px; font-size: 24px; }
  .viewhead { height: 44px; flex: none; display: flex; padding-left: 10px; }
  .minibar { width: 484px; height: 44px; display: flex; background: linear-gradient(#f0f0f0, #c9c9c9); border-top: 2px solid #fff; border-bottom: 2px solid #acacac; }
  .minicell { width: 44px; display: flex; align-items: center; justify-content: center; font: 18.500px "Open Sans", sans-serif; color: #3a3a3a; -webkit-text-stroke: .4px #3a3a3a; }
  .viewname { margin-left: auto; padding-right: 22px; line-height: 22px; }
  .winbtns { display: flex; width: 176px; margin-right: 11px; }
  .winbtns div { width: 44px; height: 44px; border: 2px solid #b1b1b1; border-left-width: 1px; border-right-width: 1px; background: linear-gradient(#e2e2e2, #f6f6f6); display: flex; align-items: center; justify-content: center; }
  .view { height: 1086px; width: 1596px; margin-left: 6px; background: #52576e; border: 4px solid #00f; padding: 856px 0 0 112px; }
  footer { height: 54px; display: flex; align-items: center; padding-left: 1122px; }
  .abort { width: 44px; height: 44px; margin-top: 2px; border: 2px solid #c9c9c9; background: linear-gradient(#e4e4e4, #f2f2f2); display: flex; align-items: center; justify-content: center; }
  .progress { width: 1062px; height: 12px; margin: 2px 0 0 3px; border: 2px solid #bfbfbf; border-radius: 5px; background: #dbdbdb; }
  .sizer { margin: 30px 0 0 49px; }
  .notes { position: absolute; left: 0; top: 0; pointer-events: none; }
  .arrow { fill: #ff306f; filter: drop-shadow(0 2px 2px rgba(0,0,0,.5)); }
  .notes text { font: 700 111px "Liberation Sans", Arial, sans-serif; fill: #ff306f; stroke: #fff; stroke-width: 21px; stroke-linejoin: round; paint-order: stroke; filter: drop-shadow(0 2px 1.500px rgba(0,0,0,.45)); }
</style>
